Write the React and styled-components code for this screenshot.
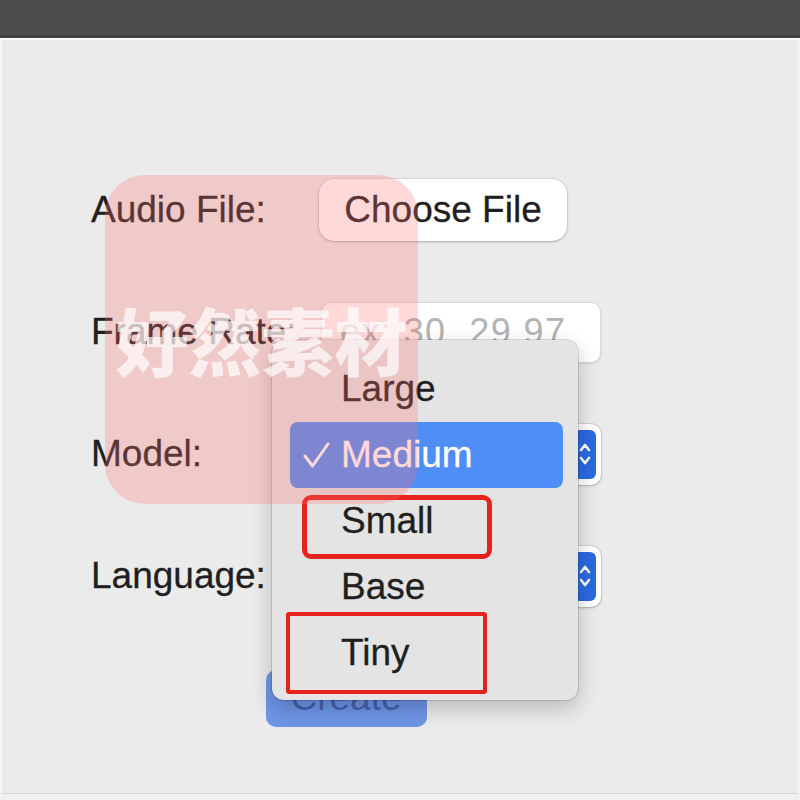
import React from "react";
import styled, { createGlobalStyle } from "styled-components";

const GlobalStyle = createGlobalStyle`
  html, body {
    margin: 0;
    padding: 0;
    background: #f0f0f0;
  }
  * { box-sizing: border-box; }
  body {
    font-family: "Liberation Sans", Arial, Helvetica, sans-serif;
  }
`;

const Window = styled.div`
  position: relative;
  width: 800px;
  height: 800px;
  overflow: hidden;
  display: flex;
  flex-direction: column;
  background: #f0f0f0;
`;

const TitleBar = styled.div`
  height: 38px;
  flex: none;
  background: #4b4b4b;
  border-bottom: 3px solid #414141;
  box-shadow: inset 0 -2px 0 #4e4e4e;
`;

const Content = styled.div`
  height: 756px;
  flex: none;
  background: #ebebeb;
  border-top: 2px solid #f9f9f9;
  border-left: 2px solid #f5f5f5;
  border-right: 3px solid #f3f3f3;
  border-bottom: 1px solid #d6d6d6;
  padding: 140px 0 0 89px;
`;

const Form = styled.div`
  display: grid;
  grid-template-columns: 228px 282px;
  grid-auto-rows: 60px;
  row-gap: 62px;
  align-items: center;
`;

const Label = styled.div`
  font-size: 37px;
  color: #1f1f1f;
  white-space: nowrap;
  -webkit-text-stroke: 0.3px #1f1f1f;
`;

const FileButton = styled.button`
  justify-self: start;
  width: 248px;
  height: 62px;
  border: none;
  border-radius: 15px;
  background: #ffffff;
  box-shadow: 0 0 0 1px rgba(0, 0, 0, 0.06), 0 1px 3px rgba(0, 0, 0, 0.22);
  font-family: inherit;
  font-size: 37px;
  color: #1f1f1f;
  -webkit-text-stroke: 0.3px #1f1f1f;
  padding: 0;
`;

const TextInput = styled.input`
  width: 280px;
  height: 61px;
  margin-left: 2px;
  border: 1px solid #d8d8d8;
  border-radius: 10px;
  background: #ffffff;
  box-shadow: 0 1px 2px rgba(0, 0, 0, 0.12);
  padding: 0 0 0 18px;
  font-family: inherit;
  font-size: 36px;
  letter-spacing: 1.4px;
  color: #262626;
  outline: none;
  &::placeholder {
    color: #b4b4b4;
  }
`;

const SelectBox = styled.div`
  width: 282px;
  height: 61px;
  display: flex;
  align-items: center;
  justify-content: space-between;
  background: #ffffff;
  border-radius: 10px;
  box-shadow: 0 0 0 1px rgba(0, 0, 0, 0.08), 0 1px 3px rgba(0, 0, 0, 0.2);
  padding: 0 5px 0 18px;
  font-size: 37px;
  color: #262626;
`;

const Stepper = styled.div`
  width: 23px;
  height: 49px;
  border-radius: 6px;
  background: #2a6ae2;
  display: flex;
  align-items: center;
  justify-content: center;
`;

const CreateButton = styled.button`
  grid-column: 1 / -1;
  justify-self: center;
  width: 161px;
  height: 57px;
  border: none;
  border-radius: 10px;
  background: #6e95e6;
  font-family: inherit;
  font-size: 37px;
  color: rgba(40, 62, 135, 0.6);
  padding: 0;
`;

const Menu = styled.div`
  position: absolute;
  left: 272px;
  top: 340px;
  width: 306px;
  height: 360px;
  background: #e4e4e4;
  border-radius: 12px;
  box-shadow: 0 0 0 1px rgba(0, 0, 0, 0.13), 0 8px 22px rgba(0, 0, 0, 0.22);
  padding: 16px 15px 14px 18px;
  display: flex;
  flex-direction: column;
`;

const MenuItem = styled.div`
  height: 66px;
  display: flex;
  align-items: center;
  border-radius: 8px;
  font-size: 37px;
  color: ${(p) => (p.$selected ? "#ffffff" : "#1f1f1f")};
  -webkit-text-stroke: 0.3px ${(p) => (p.$selected ? "#ffffff" : "#1f1f1f")};
  background: ${(p) => (p.$selected ? "#4f8ef6" : "transparent")};
`;

const CheckSlot = styled.span`
  width: 51px;
  flex: none;
  display: flex;
  align-items: center;
  padding-left: 13px;
`;

const RedBox = styled.div`
  position: absolute;
  left: ${(p) => p.$left}px;
  top: ${(p) => p.$top}px;
  width: ${(p) => p.$width}px;
  height: ${(p) => p.$height}px;
  border: ${(p) => p.$stroke}px solid #e5221b;
  border-radius: ${(p) => p.$radius}px;
`;

const Watermark = styled.div`
  position: absolute;
  left: 105px;
  top: 175px;
  width: 313px;
  height: 329px;
  border-radius: 40px;
  background: rgba(255, 110, 110, 0.27);
  display: flex;
  align-items: center;
  justify-content: center;
  pointer-events: none;
  font-family: "Noto Sans CJK SC", "Noto Sans CJK JP", sans-serif;
  font-weight: 900;
  font-size: 73px;
  color: rgba(255, 255, 255, 0.68);
  padding-bottom: 4px;
`;

const Chevrons = () => (
  <svg width="14" height="30" viewBox="0 0 14 30" fill="none">
    <path d="M3 11 L7 6 L11 11" stroke="#fff" strokeWidth="2.6" strokeLinecap="round" strokeLinejoin="round" />
    <path d="M3 19 L7 24 L11 19" stroke="#fff" strokeWidth="2.6" strokeLinecap="round" strokeLinejoin="round" />
  </svg>
);

const Check = () => (
  <svg width="28" height="28" viewBox="0 0 28 28" fill="none">
    <path d="M2 15 L9.5 25 L25 3" stroke="#fff" strokeWidth="3" strokeLinecap="round" strokeLinejoin="round" />
  </svg>
);

const models = ["Large", "Medium", "Small", "Base", "Tiny"];

export default function App() {
  return (
    <>
      <GlobalStyle />
      <Window>
        <TitleBar />
        <Content>
          <Form>
            <Label>Audio File:</Label>
            <FileButton>Choose File</FileButton>
            <Label>Frame Rate:</Label>
            <TextInput placeholder="ex: 30, 29.97" />
            <Label>Model:</Label>
            <SelectBox>
              <span>Medium</span>
              <Stepper>
                <Chevrons />
              </Stepper>
            </SelectBox>
            <Label>Language:</Label>
            <SelectBox>
              <span>Auto</span>
              <Stepper>
                <Chevrons />
              </Stepper>
            </SelectBox>
            <CreateButton>Create</CreateButton>
          </Form>
        </Content>
        <Menu>
          {models.map((m) => (
            <MenuItem key={m} $selected={m === "Medium"}>
              <CheckSlot>{m === "Medium" && <Check />}</CheckSlot>
              {m}
            </MenuItem>
          ))}
        </Menu>
        <RedBox $left={302} $top={495} $width={190} $height={64} $stroke={5} $radius={9} />
        <RedBox $left={286} $top={612} $width={201} $height={82} $stroke={4} $radius={3} />
        <Watermark>好然素材</Watermark>
      </Window>
    </>
  );
}
